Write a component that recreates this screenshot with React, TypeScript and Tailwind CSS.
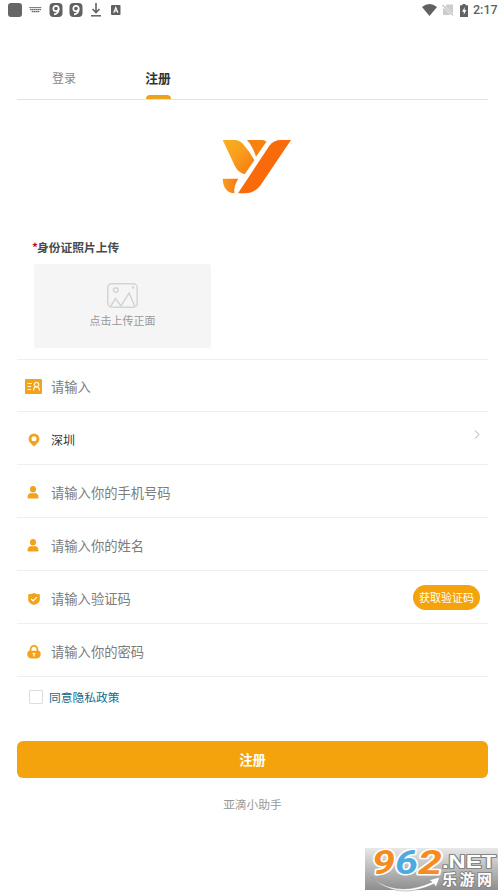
import type { ReactNode } from 'react';

function StatusBar() {
  return (
    <div className="flex h-5 items-center justify-between pl-2 pr-px text-[#616161]">
      <div className="flex items-center">
        <span className="h-3.5 w-3.5 rounded-[3px] bg-[#666]" />
        {/* Keyboard */}
        <svg className="ml-[7px]" width="13" height="8" viewBox="0 0 13 8">
          <path d="M.5 1h12v1.3H.5zM1 3h11v1.2H1zM2.5 5h8v1.3h-8z" fill="#aaa" />
          <path d="M.5 1.5h12M1 3.6h11M3 5.6h7" stroke="#666" strokeWidth="1" strokeDasharray="1.2 .8" />
        </svg>
        <NineBadge className="ml-[7px]" />
        <NineBadge className="ml-1.5" />
        <svg className="ml-[7px]" width="12" height="14" viewBox="0 0 12 14" fill="none" stroke="#616161">
          <path d="M6 0v9M2.5 6L6 9.5 9.5 6" strokeWidth="1.6" />
          <path d="M1 12.8h10" strokeWidth="1.5" />
        </svg>
        <svg className="ml-[9px]" width="10" height="10" viewBox="0 0 10 10">
          <rect width="9.5" height="10" rx="1" fill="#616161" />
          <path d="M2.7 7.7L4.8 2.5 6.9 7.7M3.5 6h2.6" fill="none" stroke="#fff" strokeWidth="1.1" />
        </svg>
      </div>
      <div className="flex items-center">
        <svg width="15" height="12" viewBox="0 0 15 12">
          <path d="M0 3Q7.5-2.8 15 3L7.5 12z" fill="#616161" />
        </svg>
        <svg className="ml-[5px]" width="12" height="12" viewBox="0 0 12 12">
          <path d="M5 .5h6V11H1V4.5z" fill="#ccc" />
          <path d="M.5 1l10.8 10.8" stroke="#fff" strokeWidth="2.2" />
          <path d="M.5 1l10.5 10.5" stroke="#999" strokeWidth="1" />
        </svg>
        <svg className="ml-1.5" width="8" height="13" viewBox="0 0 8 13">
          <path d="M2.5 0h3v1.3H8V13H0V1.3h2.5z" fill="#616161" />
          <path d="M4.8 3L2 7.7h1.8v3L6.4 6H4.6z" fill="#fff" />
        </svg>
        <span className="ml-[5px] w-6 whitespace-nowrap font-['Roboto',sans-serif] text-[12.5px] font-medium leading-5">2:17</span>
      </div>
    </div>
  );
}

function NineBadge({ className }: { className: string }) {
  return (
    <svg className={className} width="14" height="14" viewBox="0 0 14 14">
      <rect x=".5" width="13" height="14" rx="4" fill="#616161" />
      <circle cx="7" cy="5.5" r="2.7" fill="none" stroke="#fff" strokeWidth="1.7" />
      <path d="M9.6 5.5C9.8 9 8.3 11 5 11.3" fill="none" stroke="#fff" strokeWidth="1.7" />
    </svg>
  );
}

function Logo() {
  return (
    <svg width="70" height="56" viewBox="36 28 210 168">
      <defs>
        <linearGradient id="arm" x1="0" y1="0" x2="1" y2="1">
          <stop offset="0" stopColor="#f8b222" />
          <stop offset=".45" stopColor="#f99e1c" />
          <stop offset="1" stopColor="#f8750f" />
        </linearGradient>
        <linearGradient id="hook" x1="0" y1="0" x2="1" y2="0">
          <stop offset="0" stopColor="#f99e24" />
          <stop offset="1" stopColor="#f87410" />
        </linearGradient>
      </defs>
      <path d="M38 31h36q15 0 25 12 20 22 34 49l-29 42q-20-5-29-24z" fill="url(#arm)" />
      <path d="M111 31h46q8 0 12 5l-31 45q-5-14-8-21-8-18-19-29z" fill="#f8820f" />
      <path d="M243 31h-30q-22 0-35 17L84 191h20q28 0 46-22z" fill="#f86a0a" />
      <path d="M38 147h47q-14 20-12 44-33-2-35-44z" fill="url(#hook)" />
    </svg>
  );
}

function IdCardIcon() {
  return (
    <svg className="mr-px" width="17" height="15" viewBox="0 0 17 15" fill="none" stroke="#fff4d6">
      <rect width="17" height="15" rx="1" fill="#f2a31b" stroke="none" />
      <path d="M2.5 4.5H7M2.5 7.5h3.7M2.5 10.5H6" />
      <circle cx="11.5" cy="5.5" r="2.2" strokeWidth="1.2" />
      <path d="M8.5 11.7q0-3.8 3-3.8t3 3.8" strokeWidth="1.2" />
    </svg>
  );
}

function PinIcon() {
  return (
    <svg className="mr-px" width="12" height="14" viewBox="0 0 12 14">
      <path d="M6 .5a5.4 5.4 0 0 0-5.4 5.4C.6 9 4 11.2 6 13.5 8 11.2 11.4 9 11.4 5.9A5.4 5.4 0 0 0 6 .5z" fill="#f2a31b" />
      <circle cx="6" cy="5.8" r="2.5" fill="#fff" />
    </svg>
  );
}

function UserIcon() {
  return (
    <svg className="mr-[3px]" width="12" height="13" viewBox="0 0 12 13" fill="#f2a31b">
      <ellipse cx="6" cy="3.3" rx="3" ry="3.3" />
      <path d="M.5 11.5C.5 8.5 2 7.4 4 7q2 .7 4 0c2 .4 3.5 1.5 3.5 4.5q0 1-1 1h-9q-1 0-1-1z" />
    </svg>
  );
}

function ShieldIcon() {
  return (
    <svg className="mr-px" width="12" height="12" viewBox="0 0 12 12">
      <path d="M6 0q3 1.3 5.8 1.2V7q0 3.2-5.8 5Q.2 10.2.2 7V1.2Q3 1.3 6 0z" fill="#f2a31b" />
      <path d="M3.2 6l2 2 3.7-3.8" fill="none" stroke="#fff" strokeWidth="1.2" />
    </svg>
  );
}

function LockIcon() {
  return (
    <svg className="mr-px" width="14" height="14" viewBox="0 0 14 14">
      <path d="M3.6 6.5V4.2a3.4 3.4 0 0 1 6.8 0v2.3" fill="none" stroke="#f2a31b" strokeWidth="1.8" />
      <path d="M2 5.8h10q1.7.6 1.7 3 0 4.4-4.2 4.7h-5Q.3 13.2.3 8.8q0-2.4 1.7-3z" fill="#f2a31b" />
      <path d="M7 8v3.6M5.6 8.5h2.8" stroke="#fff" strokeWidth="1.2" />
    </svg>
  );
}

function Row({ icon, children }: { icon: ReactNode; children: ReactNode }) {
  return (
    <div className="flex h-[53px] items-center border-b border-[#efefef] pr-2 pt-[3px] text-[13.3px] leading-5 text-[#7c7c7c]">
      <span className="flex w-[34px] shrink-0 justify-center">{icon}</span>
      {children}
    </div>
  );
}

export default function App() {
  return (
    <div className="h-[896px] w-[504px] overflow-hidden bg-white font-['Noto_Sans_CJK_SC',sans-serif]">
      <div className="flex h-[890px] w-[498px] flex-col">
        <StatusBar />

        <main className="flex flex-col pl-[17px] pr-[10px]">
          {/* Tabs */}
          <div className="mt-[37px] flex h-[43px] border-b border-[#e2e2e2] text-center">
            <div className="w-[94px] pt-[11px] text-[12px] leading-5 text-[#888]">登录</div>
            <div className="flex w-[94px] flex-col items-center justify-between pt-[11px] text-[12.8px] font-bold leading-5 text-[#333]">
              注册
              <span className="h-1 w-[25px] rounded-t bg-[#eba31f]" />
            </div>
          </div>

          <div className="mt-[39px] flex h-14 justify-center pl-[9px]">
            <Logo />
          </div>

          {/* Upload */}
          <div className="mt-[42px] h-[123px] border-b border-[#efefef] pl-[17px]">
            <div className="-ml-0.5 flex h-[27px] text-[11.75px] font-bold leading-5 text-[#4a4a4a]">
              <span className="w-[5px] text-[#d9001b]">*</span>身份证照片上传
            </div>
            <div className="flex h-[84px] w-[177px] flex-col items-center rounded-[3px] bg-[#f5f5f5] pt-[19px] text-[11px] leading-4 text-[#999]">
              <svg className="mb-1" width="31" height="25" viewBox="0 0 31 25" fill="none" stroke="#d4d4d4" strokeWidth="1.5">
                <rect x=".8" y=".8" width="29.4" height="23.4" rx="4" />
                <circle cx="8.8" cy="7" r="2.3" />
                <path d="M3.5 23.5l5-8 5.5 7.5L22 10l6 13.5" />
                <circle cx="26" cy="4.5" r=".6" />
              </svg>
              点击上传正面
            </div>
          </div>

          {/* Form fields */}
          <div className="-mt-px flex flex-col">
            <Row icon={<IdCardIcon />}>请输入</Row>
            <Row icon={<PinIcon />}>
              <span className="text-[12px] text-[#333]">深圳</span>
              <svg className="mb-2.5 ml-auto" width="6" height="9" viewBox="0 0 6 9" fill="none" stroke="#aaa">
                <path d="M1 .5l4 4-4 4" />
              </svg>
            </Row>
            <Row icon={<UserIcon />}>请输入你的手机号码</Row>
            <Row icon={<UserIcon />}>请输入你的姓名</Row>
            <Row icon={<ShieldIcon />}>
              请输入验证码
              <button className="mb-0.5 ml-auto h-[25px] w-[67px] rounded-full bg-[#f5a30c] text-[11px] leading-[23px] text-white">获取验证码</button>
            </Row>
            <Row icon={<LockIcon />}>请输入你的密码</Row>
          </div>

          <label className="mt-2.5 flex h-5 items-center pl-3 text-[11.75px] leading-5 text-[#146a8f]">
            <span className="mr-1.5 h-3.5 w-3.5 rounded-[1px] border border-[#ddd]" />
            同意隐私政策
          </label>

          <button className="mt-[34px] h-[37px] rounded-md bg-[#f5a30c] text-[13.3px] font-bold text-white">注册</button>
          <p className="mt-4 text-center text-[11.75px] leading-5 text-[#999]">亚滴小助手</p>
        </main>

        {/* Site mark */}
        <div className="ml-auto mt-auto h-[42px] w-[133px] bg-linear-to-b from-[#e8e8e8] to-[#8e8e8e]">
          <svg className="overflow-visible" width="133" height="42" viewBox="0 0 133 42" strokeLinejoin="round">
            <path d="M6 29Q32 50 67 34l-3-2 11-3-4 10-2-3Q32 53 6 29z" fill="#fff" stroke="#888" strokeWidth=".5" />
            <g fontWeight="bold" paintOrder="stroke">
              <g fontFamily="Roboto, sans-serif" fontSize="33" fontStyle="italic" stroke="#fff" strokeWidth="3">
                <text x="7" y="26" textLength="23" lengthAdjust="spacingAndGlyphs" fill="#f68b1f">9</text>
                <text x="30" y="26" textLength="23" lengthAdjust="spacingAndGlyphs" fill="#4faae0">6</text>
                <text x="53" y="26" textLength="24" lengthAdjust="spacingAndGlyphs" fill="#f68b1f">2</text>
              </g>
              <g fill="#fff" stroke="#858585" strokeWidth="2">
                <text x="77" y="20" fontFamily="Liberation Sans, sans-serif" fontSize="18" textLength="54" lengthAdjust="spacingAndGlyphs">.NET</text>
                <text x="77" y="37" fontFamily="Noto Sans CJK SC, sans-serif" fontSize="15" textLength="50">乐游网</text>
              </g>
            </g>
          </svg>
        </div>
      </div>
    </div>
  );
}
